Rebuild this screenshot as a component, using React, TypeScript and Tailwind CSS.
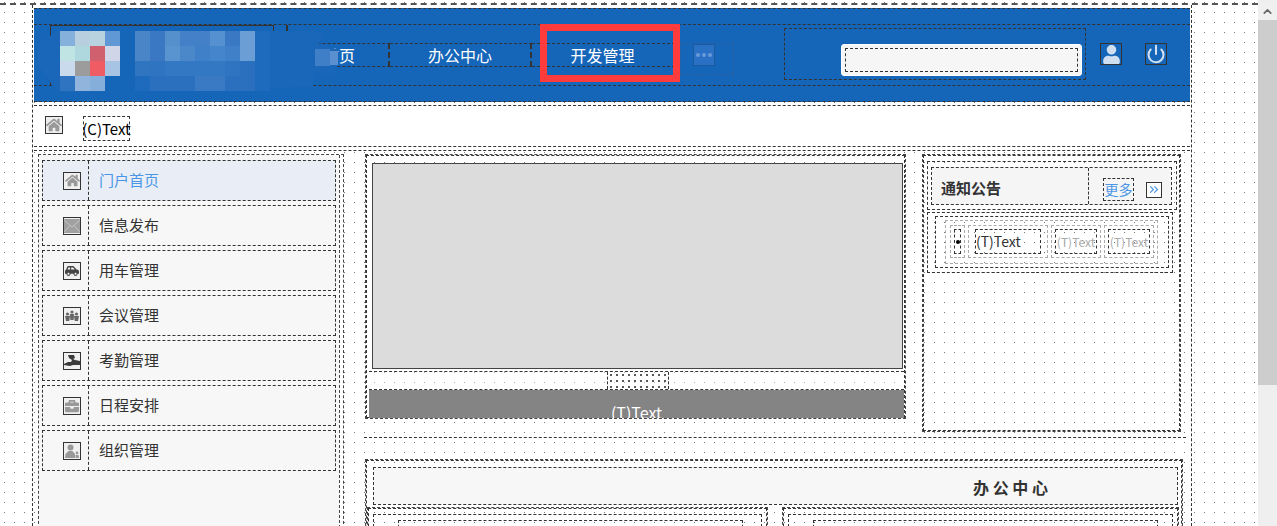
import type { ReactNode } from "react";
import { ChevronUp, ChevronsRight, Power } from "lucide-react";
import { FaBriefcase, FaCarSide, FaHome, FaUser } from "react-icons/fa";

const font = "font-['Noto_Sans_CJK_SC','Noto_Sans',sans-serif]";
// two dashed lines on top of each other, the designer's hatched frame
const hatch = "border border-dashed border-[#333] outline outline-dashed outline-[#444]";

// mosaic cells over the logo, 15px squares
const mosaic = [
  ["#85b0dc", "#b8cfe0", "#b8d3df", "#5f98d4", "#1565b9", "#4a85c8", "#3a78c4", "#5590cd", "#4480c8", "#4480c8", "#5590d0", "#3a78c4", "#6a9ed4", "#1e6abc"],
  ["#c0e4e4", "#aed8de", "#d0606e", "#d0d6e8", "#1565b9", "#4a85c8", "#3a78c4", "#5a94d0", "#4b88ca", "#4080c8", "#4485cc", "#4080c8", "#6a9ed4", "#1e6abc"],
  ["#c8daec", "#9c9c9c", "#f05c64", "#a8c4e4", "#1565b9", "#3075c0", "#2e74c0", "#3278c2", "#3278c2", "#3278c2", "#3278c2", "#2e74c0", "#2a70be", "#1e6abc"],
  ["#2e74c0", "#90b4dc", "#86aeda", "#1565b9", "#1565b9", "#1e6abc", "#2a70be", "#2a70be", "#2a70be", "#3a7ac4", "#3a7ac4", "#2a70be", "#2a70be", "#1e6abc"],
];

function Mosaic() {
  return (
    <svg className="absolute left-[-13px] top-[-1px] z-10" width="300" height="70" viewBox="0 0 300 70">
      <path d="M0 18 L20 6 L280 6 Q290 10 280 18 L298 24 L298 48 L275 48 L275 62 L20 68 L0 40 Z" fill="#1a66b8" />
      {mosaic.map((row, y) =>
        row.map((c, x) => <rect key={x + "-" + y} x={22 + x * 15} y={6 + y * 15} width="15" height="15" fill={c} />),
      )}
      <rect x="277" y="24" width="15" height="17" fill="#3f7fc8" />
      <rect x="292" y="26" width="8" height="14" fill="#5a90d0" />
    </svg>
  );
}

function NavItem({ label, w, align }: { label: string; w: string; align?: string }) {
  return (
    <div className={`flex h-[24px] items-center border-y border-r-2 border-dashed border-[#333] text-[16px] text-white ${w} ${align ?? "justify-center"}`}>
      {label}
    </div>
  );
}

function MailGlyph() {
  return (
    <svg width="16" height="16" viewBox="0 0 16 16">
      <rect x="0" y="1" width="16" height="14" fill="#a0a0a0" />
      <path d="M0 2 L8 9 L16 2 M0 14 L6 7.5 M16 14 L10 7.5" stroke="#c4c4c4" fill="none" />
    </svg>
  );
}

function MeetingGlyph() {
  return (
    <svg width="16" height="16" viewBox="0 0 16 16" fill="#666">
      <circle cx="3.5" cy="6" r="1.6" />
      <circle cx="8" cy="4" r="1.6" />
      <circle cx="12.5" cy="6" r="1.6" />
      <path d="M1 8 L6 8 L5.3 13 L2 13 Z M5.8 6 L10.2 6 L9.6 12 L6.4 12 Z M10 8 L15 8 L14 13 L10.7 13 Z" />
    </svg>
  );
}

function HandGlyph() {
  return (
    <svg width="16" height="16" viewBox="0 0 16 16" fill="#3a3a3a">
      <path d="M4 2 L10 2 L11 5 L9 6 L11 7 L16 8 L16 12 L9 12 L6 13 L0 12 L0 11 L4 9 L7 9 L8 7 L5 5 Z" />
    </svg>
  );
}

function PersonGlyph() {
  return (
    <svg width="16" height="16" viewBox="0 0 16 16" fill="#999">
      <circle cx="6.5" cy="4.5" r="3" />
      <path d="M1 15 L1.5 11 L4.5 8 L8.5 8 L11 11 L11 15 Z" />
      <circle cx="13" cy="10" r="1.4" />
      <path d="M11.5 12 L14.5 12 L15 15 L11.5 15 Z" />
    </svg>
  );
}

function SideItem({ icon, label, active }: { icon: ReactNode; label: string; active?: boolean }) {
  return (
    <div className={`flex h-[41px] border border-dashed border-[#333] ${active ? "bg-[#e9eef6]" : ""}`}>
      <div className="flex w-[46px] items-center border-r border-dashed border-[#333] pl-[20px]">
        <div className="flex size-[18px] items-center justify-center overflow-hidden border border-[#333] bg-[#f0f0f0]">{icon}</div>
      </div>
      <div className={`flex items-center pl-[10px] text-[15px] ${active ? "text-[#4a96e6]" : "text-[#333]"}`}>{label}</div>
    </div>
  );
}

function TextCell({ w, grey, children }: { w: string; grey?: boolean; children: ReactNode }) {
  return (
    <div className={`h-[33px] border border-dashed border-[#aaa] py-[3px] ${w}`}>
      <div className={`flex h-[25px] items-center border border-dashed border-[#333] ${grey ? "justify-center text-[12px] text-[#aaa]" : "text-[14px] text-[#333]"}`}>
        {children}
      </div>
    </div>
  );
}

export default function App() {
  return (
    <div className={`flex h-[526px] w-[1277px] overflow-hidden bg-white ${font}`}>
      {/* design surface */}
      <div className="h-full flex-1 bg-[radial-gradient(circle_at_4.5px_2.5px,#777_0.6px,transparent_0.8px)] bg-[size:10px_10px] pt-[3px]">
        <div className="h-full border-t-2 border-dashed border-[#555]">
          <div className="ml-[32px] h-full w-[1160px] border-x border-dashed border-[#333] px-px pt-[3px]">
            {/* header */}
            <div className="h-[94px] border-y border-dashed border-[#333] bg-[#1565b9] py-[15px]">
              <div className="flex h-[62px] border-y border-dashed border-[#333] pr-[20px]">
                <div className="relative ml-[16px] h-full w-[224px] border-x border-t border-[#333]">
                  <Mosaic />
                </div>
                <div className="ml-[12px] h-full w-[498px] border-l-2 border-dashed border-[#333] pt-[18px]">
                  <div className="flex items-start">
                    <NavItem label="门户首页" w="w-[102px] pr-[33px]" align="justify-end" />
                    <NavItem label="办公中心" w="w-[142px]" />
                    <NavItem label="开发管理" w="w-[143px]" />
                    <div className="ml-[5px] flex h-[32px] w-[54px] border border-dashed border-[#2a5f9e] pl-[12px]">
                      <div className="flex h-[22px] w-[22px] items-center justify-center gap-[2px] border border-[#1c5aa0] bg-[#2a70c4]">
                        <span className="size-[4px] rounded-full bg-[#6a9ad8]" />
                        <span className="size-[4px] rounded-full bg-[#6a9ad8]" />
                        <span className="size-[4px] rounded-full bg-[#6a9ad8]" />
                      </div>
                    </div>
                  </div>
                </div>
                <div className="mt-[3px] h-[52px] w-[302px] border border-dashed border-[#333] pl-[56px] pt-[15px]">
                  <div className="h-[32px] w-[241px] rounded-[3px] border border-white bg-[#f6f6f6] p-[3px]">
                    <div className="h-full border border-dashed border-[#333]" />
                  </div>
                </div>
                <div className="ml-[14px] mt-[18px] flex size-[22px] items-end justify-center overflow-hidden border border-[#333]">
                  <FaUser className="size-[19px] text-[#d0dff0]" />
                </div>
                <div className="ml-[23px] mt-[18px] flex size-[22px] items-center justify-center border border-[#333]">
                  <Power className="size-[20px] text-[#d0dff0]" strokeWidth={2.5} />
                </div>
              </div>
            </div>

            {/* breadcrumb */}
            <div className="mt-[3px] flex h-[42px] border-y border-dashed border-[#333] bg-white pl-[11px] pt-[10px]">
              <div className="flex size-[18px] items-center justify-center border border-[#333] bg-[#eee]">
                <FaHome className="size-[16px] text-[#999]" />
              </div>
              <div className="ml-[20px] flex h-[25px] w-[47px] items-center justify-center whitespace-nowrap border border-dashed border-[#333] pt-px text-[15px] text-black">
                (C)Text
              </div>
            </div>

            {/* content */}
            <div className="mt-[3px] flex border-t border-dashed border-[#333] pt-[3px]">
              <aside className="ml-[4px] h-[380px] w-[306px] border border-dashed border-[#444]">
                <div className="h-full w-[301px] border-r border-dashed border-[#444] bg-[#f7f7f7] pl-[3px] pt-[5px]">
                  <div className="flex w-[294px] flex-col gap-[4px]">
                    <SideItem active label="门户首页" icon={<FaHome className="size-[15px] text-[#999]" />} />
                    <SideItem label="信息发布" icon={<MailGlyph />} />
                    <SideItem label="用车管理" icon={<FaCarSide className="size-[14px] text-[#444]" />} />
                    <SideItem label="会议管理" icon={<MeetingGlyph />} />
                    <SideItem label="考勤管理" icon={<HandGlyph />} />
                    <SideItem label="日程安排" icon={<FaBriefcase className="size-[14px] text-[#999]" />} />
                    <SideItem label="组织管理" icon={<PersonGlyph />} />
                  </div>
                </div>
              </aside>

              <div className="ml-[20px] w-[822px] pt-px">
                <div className="flex h-[283px] border-b border-dashed border-[#333]">
                  {/* carousel */}
                  <div className={`ml-[2px] h-[263px] w-[539px] pl-[2px] pt-[7px] ${hatch}`}>
                    <div className="ml-[3px] h-[206px] w-[531px] border border-[#444] bg-[#dcdcdc]" />
                    <div className="mt-[2px] flex h-[19px] justify-center border-y border-dashed border-[#333] bg-white/40 pl-[2px]">
                      <div className="w-[62px] border-x border-dashed border-[#333] bg-[radial-gradient(circle,#555_0.7px,transparent_1px)] bg-[size:6px_6px]" />
                    </div>
                    <div className="flex h-[28px] justify-center overflow-hidden bg-[#848484] text-[16px] leading-[44px] text-white">
                      (T)Text
                    </div>
                  </div>

                  {/* notices */}
                  <div className={`ml-[18px] h-[276px] w-[257px] px-[3px] pt-[5px] ${hatch}`}>
                    <div className="h-[49px] w-[250px] border border-dashed border-[#333] px-[3px] pt-[5px]">
                      <div className="flex h-[38px] w-[241px] border border-dashed border-[#333] bg-[#f5f5f5]">
                        <div className="flex w-[157px] items-center border-r border-dashed border-[#333] pl-[9px] pt-[4px] text-[15px] font-bold text-[#333]">
                          通知公告
                        </div>
                        <div className="flex flex-1 items-center pl-[14px] pt-[7px]">
                          <div className="flex h-[23px] w-[31px] items-center justify-center border border-dashed border-[#333] text-[14px] text-[#4a96e6]">
                            更多
                          </div>
                          <div className="ml-[12px] flex h-[16px] w-[16px] items-center justify-center border border-[#333] bg-white">
                            <ChevronsRight className="size-[15px] text-[#4a96e6]" />
                          </div>
                        </div>
                      </div>
                    </div>
                    <div className="mt-[2px] h-[61px] w-[246px] border border-dashed border-[#333] px-[7px] pt-[3px]">
                      <div className="h-[52px] w-[234px] border border-dashed border-[#333] pl-[9px] pt-[3px]">
                        <div className="flex h-[44px] w-[213px] gap-[3px] border border-dashed border-[#aaa] pl-[4px] pt-[4px]">
                          <div className="h-[33px] w-[15px] border border-dashed border-[#aaa] px-[3px] py-[3px]">
                            <div className="h-[25px] border border-dashed border-[#333] pl-px pt-[10px]">
                              <div className="size-[4px] rounded-full bg-black" />
                            </div>
                          </div>
                          <TextCell w="w-[80px] px-[6px]">(T)Text</TextCell>
                          <TextCell w="w-[50px] px-[3px]" grey>(T)Text</TextCell>
                          <TextCell w="w-[50px] px-[3px]" grey>(T)Text</TextCell>
                        </div>
                      </div>
                    </div>
                  </div>
                </div>

                {/* office centre */}
                <div className={`mt-[22px] ml-[2px] w-[816px] pl-[6px] pr-[3px] pt-[6px] ${hatch}`}>
                  <div className="h-[38px] border border-dashed border-[#333] bg-[#f7f7f7] pl-[599px] text-[16px] font-bold leading-[38px] text-[#333]">
                    办 公 中 心
                  </div>
                  <div className="mt-[3px] flex gap-[16px]">
                    <div className={`ml-[-5px] h-[60px] w-[401px] px-[4px] pt-[5px] ${hatch}`}>
                      <div className="h-full border border-dashed border-[#333] pl-[24px] pt-[5px]">
                        <div className="h-full w-[345px] border border-dashed border-[#333]" />
                      </div>
                    </div>
                    <div className={`h-[60px] w-[396px] px-[4px] pt-[5px] ${hatch}`}>
                      <div className="h-full border border-dashed border-[#333] pl-[24px] pt-[5px]">
                        <div className="h-full w-[345px] border border-dashed border-[#333]" />
                      </div>
                    </div>
                  </div>
                </div>
              </div>
            </div>
          </div>
        </div>
      </div>

      {/* scrollbar */}
      <div className="flex h-full w-[19px] flex-col bg-[#efefef] pt-[3px]">
        <div className="flex h-[17px] items-center justify-center bg-[#f0f0f0]">
          <ChevronUp className="size-[13px] text-[#666]" strokeWidth={3} />
        </div>
        <div className="h-[365px] bg-[#cdcdcd]" />
      </div>

      {/* annotation box drawn on top of the shot */}
      <div className="absolute left-[540px] top-[24px] h-[58px] w-[140px] border-[7px] border-[#ff3b3b]" />
    </div>
  );
}
